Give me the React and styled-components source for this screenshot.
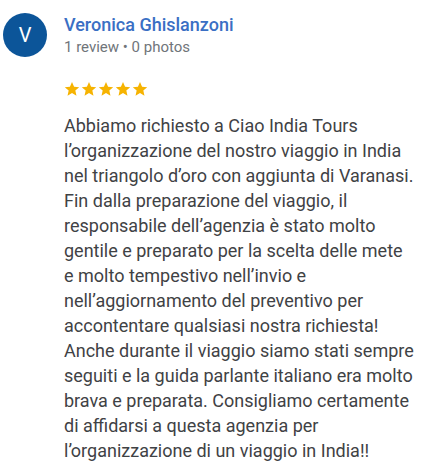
import React from "react"
import styled, { createGlobalStyle } from "styled-components"

const GlobalStyle = createGlobalStyle`
  html, body {
    margin: 0;
    padding: 0;
    background: #ffffff;
  }
  body {
    font-family: Roboto, "Liberation Sans", Arial, sans-serif;
  }
`

const Review = styled.div`
  display: grid;
  grid-template-columns: 64px 1fr;
  padding: 13px 4px 0 0;
`

const Avatar = styled.div`
  width: 44px;
  height: 44px;
  margin-left: 3px;
  border-radius: 50%;
  background: #0c5599;
  color: #ffffff;
  display: flex;
  align-items: center;
  justify-content: center;
  font-size: 20px;
  font-weight: 400;
`

const Header = styled.div`
  display: flex;
  flex-direction: column;
  padding-top: 1px;
`

const Name = styled.div`
  font-size: 18px;
  font-weight: 500;
  color: #3a6fc4;
  line-height: 22px;
`

const Meta = styled.div`
  font-size: 15px;
  color: #70757a;
  line-height: 20px;
  margin-top: 1px;
`

const Body = styled.div`
  grid-column: 2;
`

const Stars = styled.div`
  display: flex;
  gap: 1px;
  margin-top: 24px;
`

const Text = styled.p`
  margin: 16px 0 0;
  font-size: 18px;
  line-height: 25px;
  color: #3f4245;
  white-space: nowrap;
`

const lines = [
  "Abbiamo richiesto a Ciao India Tours",
  "l’organizzazione del nostro viaggio in India",
  "nel triangolo d’oro con aggiunta di Varanasi.",
  "Fin dalla preparazione del viaggio, il",
  "responsabile dell’agenzia è stato molto",
  "gentile e preparato per la scelta delle mete",
  "e molto tempestivo nell’invio e",
  "nell’aggiornamento del preventivo per",
  "accontentare qualsiasi nostra richiesta!",
  "Anche durante il viaggio siamo stati sempre",
  "seguiti e la guida parlante italiano era molto",
  "brava e preparata. Consigliamo certamente",
  "di affidarsi a questa agenzia per",
  "l’organizzazione di un viaggio in India!!",
]

function Star() {
  return (
    <svg width="16" height="16" viewBox="0 0 24 24">
      <path
        fill="#f6b301"
        d="M12 1.5l3.1 7.1 7.7.7-5.8 5.1 1.7 7.6L12 18l-6.7 4 1.7-7.6-5.8-5.1 7.7-.7z"
      />
    </svg>
  )
}

export default function App() {
  return (
    <>
      <GlobalStyle />
      <Review>
        <Avatar>V</Avatar>
        <Header>
          <Name>Veronica Ghislanzoni</Name>
          <Meta>1 review • 0 photos</Meta>
        </Header>
        <Body>
          <Stars>
            {[0, 1, 2, 3, 4].map((i) => (
              <Star key={i} />
            ))}
          </Stars>
          <Text>
            {lines.map((line, i) => (
              <React.Fragment key={i}>
                {line}
                {i < lines.length - 1 && <br />}
              </React.Fragment>
            ))}
          </Text>
        </Body>
      </Review>
    </>
  )
}
